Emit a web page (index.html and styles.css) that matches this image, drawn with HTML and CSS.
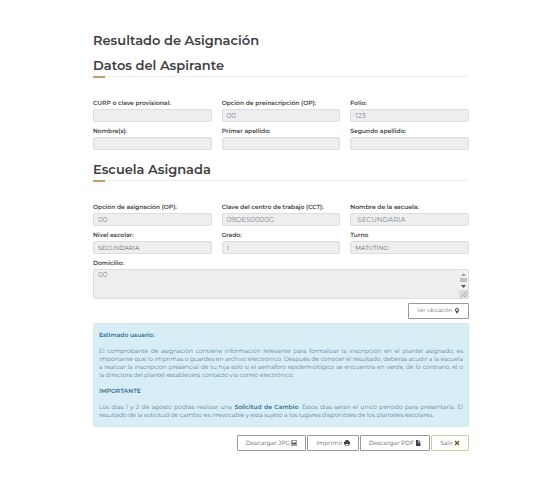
FILE: index.html
```html
<!DOCTYPE html>
<html lang="es">
<head>
  <meta charset="UTF-8" />
  <meta name="viewport" content="width=device-width, initial-scale=1.0"/>
  <title>Resultado de Asignación</title>
  <link rel="stylesheet" href="styles.css">
</head>
<body>
  <main class="container">
    <h1>Resultado de Asignación</h1>

    <!-- Datos del Aspirante -->
    <h2>Datos del Aspirante</h2>
    <hr class="red">
    <div class="form-grid">
      <div class="field">
        <label for="curp">CURP o clave provisional:</label>
        <input type="text" id="curp" readonly />
      </div>
      <div class="field">
        <label for="preinscripcion">Opción de preinscripción (OP):</label>
        <input type="text" id="preinscripcion" value="00" readonly />
      </div>
      <div class="field">
        <label for="folio">Folio:</label>
        <input type="text" id="folio" value="123" readonly />
      </div>
      <div class="field">
        <label for="nombre">Nombre(s):</label>
        <input type="text" id="nombre" readonly />
      </div>
      <div class="field">
        <label for="apellido1">Primer apellido:</label>
        <input type="text" id="apellido1" readonly />
      </div>
      <div class="field">
        <label for="apellido2">Segundo apellido:</label>
        <input type="text" id="apellido2" readonly />
      </div>
    </div>

    <!-- Escuela Asignada -->
    <h2>Escuela Asignada</h2>
    <hr class="red">
    <div class="form-grid">
      <div class="field">
        <label for="asignacion">Opción de asignación (OP):</label>
        <input type="text" id="asignacion" value="00" readonly />
      </div>
      <div class="field">
        <label for="cct">Clave del centro de trabajo (CCT):</label>
        <input type="text" id="cct" value="09DES0000G" readonly />
      </div>
      <div class="field">
        <label for="escuela">Nombre de la escuela:</label>
        <input type="text" id="escuela" class="indent" value="SECUNDARIA" readonly />
      </div>
      <div class="field">
        <label for="nivel">Nivel escolar:</label>
        <input type="text" id="nivel" class="dark" value="SECUNDARIA" readonly />
      </div>
      <div class="field">
        <label for="grado">Grado:</label>
        <input type="text" id="grado" class="dark" value="1" readonly />
      </div>
      <div class="field">
        <label for="turno">Turno</label>
        <input type="text" id="turno" class="dark" value="MATUTINO" readonly />
      </div>
      <div class="field full">
        <label for="domicilio">Domicilio:</label>
        <div class="textarea-wrap">
          <textarea id="domicilio" readonly>00</textarea>
          <svg class="scroll" viewBox="0 0 9 28">
            <path fill="#f1f1f1" d="M0 0h9v20H0z"/>
            <path fill="#a3a3a3" d="M2 6l2.500-3L7 6z"/>
            <path fill="#c1c1c1" d="M1 8h7v4H1z"/>
            <path fill="#505050" d="M2 15h5l-2.500 3z"/>
            <path fill="#dcdcdc" d="M0 20h9v8H0z"/>
            <path stroke="#888" stroke-width=".6" d="M2 27l6-6M5 27l3-3"/>
          </svg>
        </div>
      </div>
    </div>

    <div class="actions">
      <button type="button" class="btn btn-map">Ver Ubicación
        <svg class="icon" viewBox="0 0 12 12"><path fill-rule="evenodd" d="M6 0a4 4 0 0 0-4 4c0 2 1.500 3 2.500 5L6 12l1.500-3C8.500 7 10 6 10 4a4 4 0 0 0-4-4zm0 2a2 2 0 1 1 0 4 2 2 0 0 1 0-4z"/></svg>
      </button>
    </div>

    <div class="alert">
      <p><strong>Estimado usuario:</strong></p>
      <p>El comprobante de asignación contiene información relevante para formalizar la inscripción en el plantel asignado, es importante que lo imprimas o guardes en archivo electrónico. Después de conocer el resultado, deberás acudir a la escuela a realizar la inscripción presencial de tu hija sólo si el semáforo epidemiológico se encuentra en verde, de lo contrario, el o la directora del plantel establecerá contacto vía correo electrónico.</p>
      <p><strong>IMPORTANTE</strong></p>
      <p>Los días 1 y 2 de agosto podrás realizar una <strong>Solicitud de Cambio</strong>. Estos días serán el único periodo para presentarla. El resultado de la solicitud de cambio es irrevocable y está sujeto a los lugares disponibles de los planteles escolares.</p>
    </div>

    <div class="actions">
      <button type="button" class="btn">Descargar JPG
        <svg class="icon" viewBox="0 0 12 12"><path fill-rule="evenodd" d="M0 1h12v10H0zM1 2v8h10V2zM2 9V7l2-2 2 2 3-3 1 1v4zM2 3h2v2H2z"/></svg>
      </button>
      <button type="button" class="btn">Imprimir
        <svg class="icon" viewBox="0 0 12 12"><path fill-rule="evenodd" d="M3 0h6v3h2l1 1v5h-2v3H2V9H0V4l1-1h2zM3 8v3h6V8z"/></svg>
      </button>
      <button type="button" class="btn">Descargar PDF
        <svg class="icon" viewBox="0 0 12 12"><path d="M2 0h4v5h5v7H2zM7 0l4 4H7z"/></svg>
      </button>
      <button type="button" class="btn btn-exit">Salir
        <svg class="icon" viewBox="0 0 12 12"><path d="M3 1l3 3 3-3 2 2-3 3 3 3-2 2-3-3-3 3-2-2 3-3-3-3z"/></svg>
      </button>
    </div>
  </main>
</body>
</html>
```
FILE: styles.css
```css
* {
  box-sizing: border-box;
  margin: 0;
  padding: 0;
  font-family: Montserrat, Inter, "Open Sans", sans-serif;
  text-rendering: geometricPrecision;
}

body {
  background: #fff;
  color: #404041;
  font-size: 6px;
}

.container {
  padding: 32px 72px 32px 93px;
}

h1, h2 {
  font-size: 13px;
  line-height: 17px;
  font-weight: 600;
  text-rendering: auto;
}

h1 {
  margin-bottom: 8px;
}

hr.red {
  position: relative;
  overflow: visible;
  border: none;
  border-top: 1px solid #eee;
  margin: 2px 0 22px;
}

hr.red::after {
  content: "";
  position: absolute;
  top: -1px;
  left: 0;
  width: 12px;
  height: 2px;
  background: #c29a68;
}

.form-grid {
  display: grid;
  grid-template-columns: repeat(3, 1fr);
  gap: 5px 10px;
}

.form-grid + h2 {
  margin-top: 11px;
}

.field {
  display: flex;
  flex-direction: column;
}

.full {
  grid-column: 1 / -1;
}

label {
  line-height: 8px;
  margin-bottom: 2px;
  font-weight: 600;
}

input, textarea {
  width: 100%;
  height: 13px;
  padding: 0 4px;
  border: 1px solid #ddd;
  border-radius: 2px;
  background: #eee;
  color: #858c98;
  font-size: 7px;
  line-height: 9px;
  outline: none;
}

input.indent {
  padding-left: 6px;
}

input.dark {
  color: #666;
  font-size: 6px;
}

.textarea-wrap {
  position: relative;
}

textarea {
  display: block;
  height: 30px;
  resize: none;
}

.scroll {
  position: absolute;
  top: 1px;
  right: 1px;
  width: 9px;
  height: 28px;
}

.actions {
  display: flex;
  justify-content: flex-end;
  gap: 1px;
  margin: 4px 0;
}

.btn {
  display: flex;
  align-items: center;
  gap: 1px;
  height: 16px;
  padding: 0 8px;
  border: 1px solid #999;
  border-radius: 1px;
  background: #fff;
  color: #666;
  font-size: 6px;
  cursor: pointer;
}

.btn-map {
  gap: 2px;
  font-size: 5px;
}

.btn-exit {
  border-color: #dfc4a0;
}

.icon {
  width: 6px;
  height: 6px;
  fill: #444;
}

.btn-exit .icon {
  fill: #80581f;
}

.alert {
  padding: 7px 5px;
  margin-bottom: 8px;
  border: 1px solid #d0eaf0;
  border-radius: 2px;
  background: #d9edf7;
  color: #1f5876;
  font-weight: 300;
  line-height: 8px;
  text-align: justify;
}

.alert p + p {
  margin-top: 8px;
}

.alert strong {
  color: #31708f;
  font-weight: 600;
}
```
